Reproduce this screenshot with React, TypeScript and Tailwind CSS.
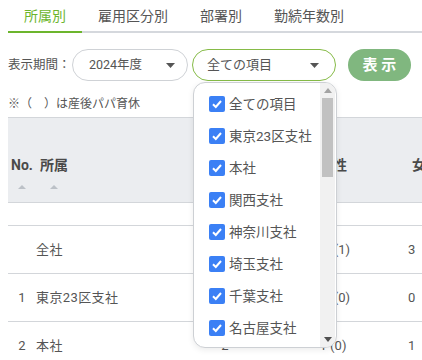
import { useState } from "react";

const tabs = ["所属別", "雇用区分別", "部署別", "勤続年数別"];

const branches = [
  "全ての項目",
  "東京23区支社",
  "本社",
  "関西支社",
  "神奈川支社",
  "埼玉支社",
  "千葉支社",
  "名古屋支社",
  "大阪支社",
];

const rows = [
  { no: "", name: "全社", total: "15", male: "12 (1)", female: "3" },
  { no: "1", name: "東京23区支社", total: "10", male: "10 (0)", female: "0" },
  { no: "2", name: "本社", total: "2", male: "1 (0)", female: "1" },
];

function Caret({ className = "" }: { className?: string }) {
  return (
    <svg width="9" height="5" viewBox="0 0 9 5" className={className}>
      <path d="M0 0 H9 L4.5 5 Z" fill="currentColor" />
    </svg>
  );
}

function SortUp() {
  return (
    <svg width="8" height="4" viewBox="0 0 8 4" className="text-[#bcc1c7] mt-[10px]">
      <path d="M0 4 L4 0 L8 4 Z" fill="currentColor" />
    </svg>
  );
}

function Check() {
  return (
    <span className="w-4 h-4 rounded-[2px] bg-[#3b80f5] flex items-center justify-center shrink-0">
      <svg width="12" height="12" viewBox="0 0 12 12">
        <path d="M2 6.2 L4.8 9 L10 3" stroke="white" strokeWidth="2" fill="none" />
      </svg>
    </span>
  );
}

export default function App() {
  const [active] = useState(0);

  return (
    <div className="w-[422px] h-[360px] overflow-hidden bg-white text-[#555] font-[family-name:Roboto,'Noto_Sans_CJK_JP',sans-serif]">
      {/* tabs */}
      <div className="ml-2 flex border-b-2 border-[#d5d8dd]">
        {tabs.map((t, i) => (
          <div
            key={t}
            className={
              i === active
                ? "px-4 pt-[6px] pb-[5px] text-[14px] leading-5 -mb-[2px] border-b-2 border-[#6cb52d] text-[#6cb52d]"
                : "px-4 pt-[6px] pb-[5px] text-[14px] leading-5 -mb-[2px] border-b-2 border-transparent"
            }
          >
            {t}
          </div>
        ))}
      </div>

      {/* controls */}
      <div className="mt-4 ml-2 flex items-center">
        <span className="text-[12.5px] w-[64px] whitespace-nowrap">表示期間：</span>
        <div className="w-[116px] h-8 rounded-full border border-[#cfd2d6] flex items-center justify-between pl-4 pr-3 text-[12.5px]">
          <span>2024年度</span>
          <Caret className="text-[#555]" />
        </div>
        <div className="relative ml-1">
          <div className="w-[144px] h-8 rounded-full border border-[#86bb47] flex items-center justify-between pl-[14px] pr-4 text-[13px]">
            <span>全ての項目</span>
            <Caret className="text-[#555]" />
          </div>
          <div className="absolute z-10 left-[1px] top-[33px] w-[144px] h-[266px] rounded-[12px] border border-[#cdd0d4] bg-white overflow-hidden flex shadow-[0_2px_6px_rgba(0,0,0,0.08)]">
            <ul className="flex-1 pt-[5px] pl-[15px]">
              {branches.map((b) => (
                <li key={b} className="h-8 flex items-center gap-[4px] text-[13.5px] text-[#555] whitespace-nowrap">
                  <Check />
                  <span>{b}</span>
                </li>
              ))}
            </ul>
            <div className="w-[15px] mr-[1px] bg-[#f1f1f1] flex flex-col">
              <div className="h-[15px] flex items-center justify-center">
                <svg width="8" height="5" viewBox="0 0 8 5">
                  <path d="M0 5 L4 0 L8 5 Z" fill="#a3a3a3" />
                </svg>
              </div>
              <div className="mx-[2px] h-[79px] bg-[#c1c1c1]" />
              <div className="flex-1" />
              <div className="h-[15px] flex items-center justify-center">
                <svg width="8" height="5" viewBox="0 0 8 5">
                  <path d="M0 0 H8 L4 5 Z" fill="#505050" />
                </svg>
              </div>
            </div>
          </div>
        </div>
        <button className="ml-3 w-[63px] h-8 rounded-full bg-[#80b77f] text-white font-bold text-[15px] tracking-[0.25em] pl-[0.25em]">
          表示
        </button>
      </div>

      {/* note */}
      <p className="mt-[15px] ml-2 text-[12px] leading-4 whitespace-pre">※（　）は産後パパ育休</p>

      {/* table */}
      <div className="mt-[5px] ml-2 overflow-hidden">
        <table className="table-fixed border-collapse w-[482px] text-[13px]">
          <colgroup>
            <col className="w-[28px]" />
            <col className="w-[144px]" />
            <col className="w-[90px]" />
            <col className="w-[126px]" />
            <col className="w-[94px]" />
          </colgroup>
          <thead>
            <tr className="bg-[#ebedf0] border-y border-[#d3d6da] h-[85px] text-[14px] font-bold text-[#4a4a4a]">
              <th className="align-top pt-[37px]">
                <div className="flex flex-col items-center leading-5">
                  No.
                  <SortUp />
                </div>
              </th>
              <th className="align-top pt-[37px] pl-1 text-left">
                <div className="inline-flex flex-col items-center leading-5">
                  所属
                  <SortUp />
                </div>
              </th>
              <th className="align-top pt-[37px]">
                <div className="inline-flex flex-col items-center leading-5">
                  合計
                  <SortUp />
                </div>
              </th>
              <th className="align-top pt-[37px]">
                <div className="inline-flex flex-col items-center leading-5">
                  男性
                  <SortUp />
                </div>
              </th>
              <th className="align-top pt-[37px] pl-4 text-left">
                <div className="inline-flex flex-col items-center leading-5">
                  女性
                  <SortUp />
                </div>
              </th>
            </tr>
          </thead>
          <tbody>
            <tr className="h-[23px] border-b border-[#d3d6da]">
              <td colSpan={5} />
            </tr>
            {rows.map((r) => (
              <tr key={r.name} className="h-[48px] border-b border-[#d3d6da]">
                <td className="text-center">{r.no}</td>
                <td className="tracking-[0.03em]">{r.name}</td>
                <td className="text-center">{r.total}</td>
                <td className="text-center">{r.male}</td>
                <td className="pl-3">{r.female}</td>
              </tr>
            ))}
          </tbody>
        </table>
      </div>
    </div>
  );
}
